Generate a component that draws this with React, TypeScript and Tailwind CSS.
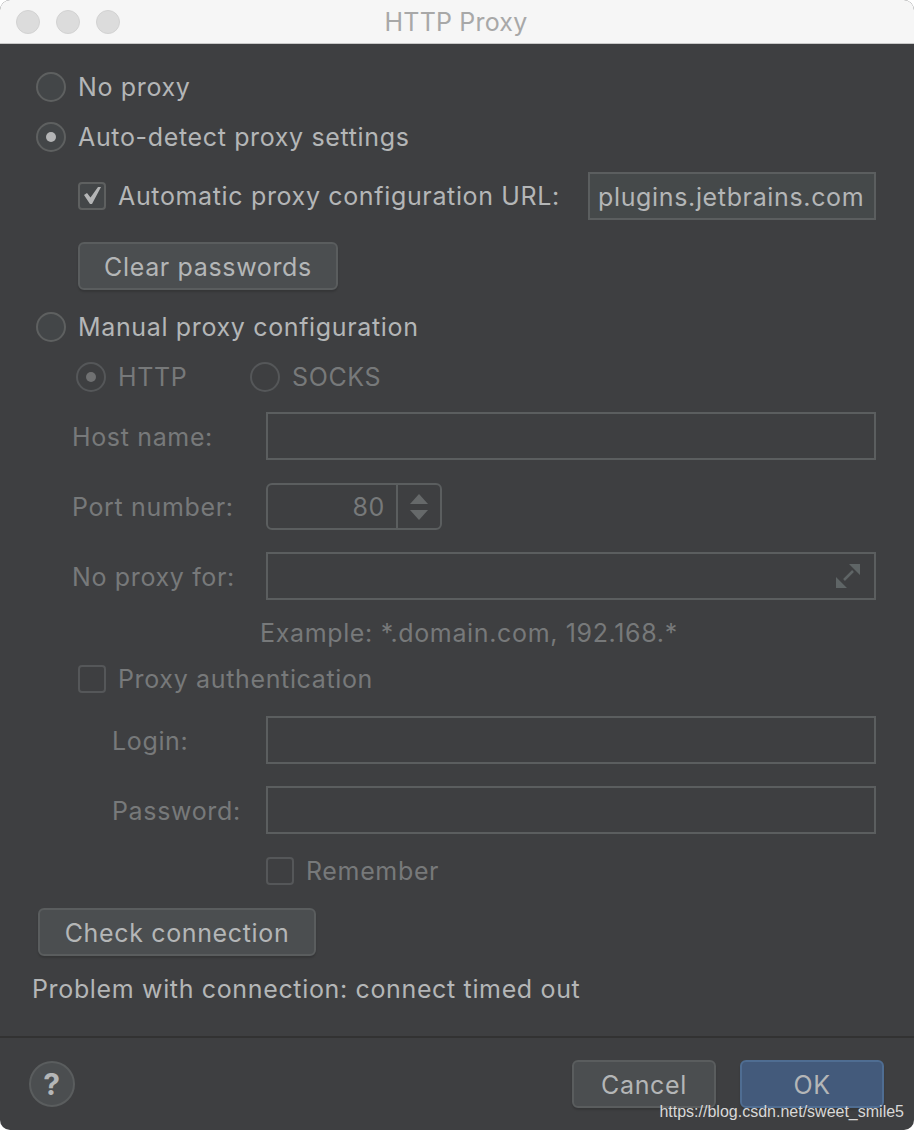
import React from 'react';

const fontBody = "font-['Inter',sans-serif]";

function Radio({ checked, disabled, label }: { checked?: boolean; disabled?: boolean; label: string }) {
  return (
    <div className="flex items-center h-[30px]">
      <span
        className={`w-[30px] h-[30px] rounded-full border-2 flex items-center justify-center shrink-0 ${
          disabled ? 'border-[#555759] bg-[#3e3f41]' : 'border-[#5e6060] bg-[#434648]'
        }`}
      >
        {checked && <span className={`w-[10px] h-[10px] rounded-full ${disabled ? 'bg-[#707172]' : 'bg-[#b4b5b6]'}`} />}
      </span>
      <span className={`ml-[12px] ${disabled ? 'text-[#77797a]' : 'text-[#b4b6b7]'}`}>{label}</span>
    </div>
  );
}

function Check({ checked, disabled, label }: { checked?: boolean; disabled?: boolean; label: string }) {
  return (
    <div className="flex items-center h-[30px]">
      <span
        className={`w-[28px] h-[28px] rounded-[4px] border-2 flex items-center justify-center shrink-0 ${
          disabled ? 'border-[#555759] bg-[#3e3f41]' : 'border-[#5e6060] bg-[#434648]'
        }`}
      >
        {checked && (
          <svg className="mb-[2px]" width="17" height="17" viewBox="0 0 17 17">
            <path d="M0 8 L3 6 L6.5 10.5 L14 0 L17 0 L8 17 L6 17 Z" fill="#b4b5b6" />
          </svg>
        )}
      </span>
      <span className={`ml-[12px] ${disabled ? 'text-[#77797a]' : 'text-[#b4b6b7]'}`}>{label}</span>
    </div>
  );
}

function Btn({ label, w, primary }: { label: string; w: string; primary?: boolean }) {
  return (
    <button
      className={`h-[48px] rounded-[6px] border-2 pt-[1px] text-[#b4b6b7] shadow-[0_2px_2px_rgba(0,0,0,0.15)] ${w} ${
        primary ? 'bg-[#435a7b] border-[#4f6d92]' : 'bg-[#4b4e50] border-[#5a5d5e]'
      }`}
    >
      {label}
    </button>
  );
}

function Field({ className, children }: { className?: string; children?: React.ReactNode }) {
  return (
    <div className={`h-[48px] border-2 border-[#5b5e5f] flex items-center relative ${className ?? ''}`}>{children}</div>
  );
}

function LabeledField({ label, indent, children }: { label: string; indent: string; children?: React.ReactNode }) {
  return (
    <div className="flex items-center">
      <span className={`w-[230px] pt-[1px] text-[#77797a] ${indent}`}>{label}</span>
      <Field className="flex-1">{children}</Field>
    </div>
  );
}

export default function App() {
  return (
    <div className={`w-[914px] h-[1130px] bg-white relative text-[25px] leading-[30px] tracking-[0.65px] ${fontBody}`}>
      <div className="w-full h-full rounded-[10px] overflow-hidden flex flex-col bg-[#3e3f41]">
        {/* title bar */}
        <div className="h-[44px] bg-[#f6f6f6] border-b border-[#c8c8c8] flex items-center pl-[16px] gap-[16px] relative shrink-0">
          <span className="w-[24px] h-[24px] rounded-full bg-[#dcdcdc] border border-[#d2d2d2]" />
          <span className="w-[24px] h-[24px] rounded-full bg-[#dcdcdc] border border-[#d2d2d2]" />
          <span className="w-[24px] h-[24px] rounded-full bg-[#dcdcdc] border border-[#d2d2d2]" />
          <span className="absolute inset-x-0 pt-[1px] pr-[2px] text-center text-[#a8a8a8] tracking-[0.2px]">HTTP Proxy</span>
        </div>

        {/* form */}
        <div className="flex-1 flex flex-col pl-[36px] pr-[38px] pt-[28px]">
          <Radio label="No proxy" />
          <div className="mt-[20px]">
            <Radio checked label="Auto-detect proxy settings" />
          </div>

          <div className="mt-[20px] ml-[42px] flex items-center justify-between">
            <Check checked label="Automatic proxy configuration URL:" />
            <Field className="w-[288px] bg-[#45494a] pl-[8px] pt-[1px] text-[#b4b6b7]">plugins.jetbrains.com</Field>
          </div>
          <div className="mt-[22px] ml-[42px]">
            <Btn label="Clear passwords" w="w-[260px]" />
          </div>

          <div className="mt-[22px]">
            <Radio label="Manual proxy configuration" />
          </div>
          <div className="mt-[20px] ml-[40px] flex">
            <div className="w-[174px]">
              <Radio checked disabled label="HTTP" />
            </div>
            <Radio disabled label="SOCKS" />
          </div>

          <div className="mt-[20px]">
            <LabeledField label="Host name:" indent="pl-[36px]" />
          </div>
          <div className="mt-[23px] flex items-center">
            <span className="w-[230px] pl-[36px] text-[#77797a]">Port number:</span>
            <div className="h-[47px] w-[176px] border-2 border-[#5b5e5f] rounded-[6px] flex items-center">
              <span className="w-[128px] text-right pr-[11px] text-[#77797a]">80</span>
              <div className="flex-1 h-full border-l-2 border-[#5b5e5f] flex flex-col items-center justify-center gap-[6px]">
                <svg width="18" height="10" viewBox="0 0 18 10"><path d="M9 0 L18 10 L0 10 Z" fill="#66696a" /></svg>
                <svg width="18" height="10" viewBox="0 0 18 10"><path d="M0 0 L18 0 L9 10 Z" fill="#66696a" /></svg>
              </div>
            </div>
          </div>
          <div className="mt-[22px]">
            <LabeledField label="No proxy for:" indent="pl-[36px]">
              <svg className="absolute right-[14px] top-[10px]" width="24" height="24" viewBox="0 0 24 24">
                <path d="M13 0 H24 V11 Z M0 13 V24 H11 Z" fill="#5f6566" />
                <path d="M8 16 L17 7" stroke="#5f6566" strokeWidth="2.5" />
              </svg>
            </LabeledField>
          </div>
          <div className="mt-[18px] ml-[224px] text-[#77797a]">Example: *.domain.com, 192.168.*</div>
          <div className="mt-[16px] ml-[42px]">
            <Check disabled label="Proxy authentication" />
          </div>
          <div className="mt-[22px]">
            <LabeledField label="Login:" indent="pl-[76px]" />
          </div>
          <div className="mt-[22px]">
            <LabeledField label="Password:" indent="pl-[76px]" />
          </div>
          <div className="mt-[22px] ml-[230px]">
            <Check disabled label="Remember" />
          </div>
          <div className="mt-[22px] ml-[2px]">
            <Btn label="Check connection" w="w-[278px]" />
          </div>
          <div className="mt-[18px] -ml-[4px] text-[#b4b6b7]">Problem with connection: connect timed out</div>
        </div>

        {/* footer */}
        <div className="h-[94px] shrink-0 border-t-2 border-[#323232] flex items-center justify-between pl-[29px] pr-[30px]">
          <span className="w-[46px] h-[46px] rounded-full border-2 border-[#5a5d5e] bg-[#4b4e50] flex items-center justify-center text-[30px] text-[#b4b6b7] font-bold">?</span>
          <div className="flex gap-[24px]">
            <Btn label="Cancel" w="w-[144px]" />
            <Btn label="OK" w="w-[144px]" primary />
          </div>
        </div>
      </div>

      {/* watermark */}
      <span className="absolute right-[10px] top-[1102px] font-['Liberation_Sans',sans-serif] text-[16px] leading-[20px] tracking-normal text-[#d8d8d8]">
        https://blog.csdn.net/sweet_smile5
      </span>
    </div>
  );
}
